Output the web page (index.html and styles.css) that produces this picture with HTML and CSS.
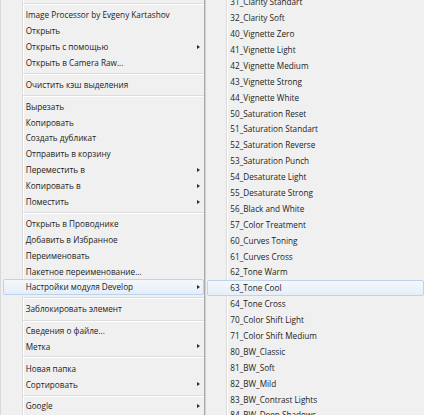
FILE: index.html
```html
<!DOCTYPE html>
<html lang="ru">
<head>
<meta charset="utf-8">
<title>Context menu</title>
<link rel="stylesheet" href="styles.css">
</head>
<body>
<div class="screen">
  <div class="menu menu-main">
    <div class="sep sep-top"></div>
    <div class="item">Image Processor by Evgeny Kartashov</div>
    <div class="item">Открыть</div>
    <div class="item sub">Открыть с помощью<span class="arrow"></span></div>
    <div class="item">Открыть в Camera Raw...</div>
    <div class="sep"></div>
    <div class="item">Очистить кэш выделения</div>
    <div class="sep"></div>
    <div class="item">Вырезать</div>
    <div class="item">Копировать</div>
    <div class="item">Создать дубликат</div>
    <div class="item">Отправить в корзину</div>
    <div class="item sub">Переместить в<span class="arrow"></span></div>
    <div class="item sub">Копировать в<span class="arrow"></span></div>
    <div class="item sub">Поместить<span class="arrow"></span></div>
    <div class="sep"></div>
    <div class="item">Открыть в Проводнике</div>
    <div class="item">Добавить в Избранное</div>
    <div class="item">Переименовать</div>
    <div class="item">Пакетное переименование...</div>
    <div class="item sub active">Настройки модуля Develop<span class="arrow"></span></div>
    <div class="sep"></div>
    <div class="item">Заблокировать элемент</div>
    <div class="sep"></div>
    <div class="item">Сведения о файле...</div>
    <div class="item sub">Метка<span class="arrow"></span></div>
    <div class="sep"></div>
    <div class="item">Новая папка</div>
    <div class="item sub">Сортировать<span class="arrow"></span></div>
    <div class="sep"></div>
    <div class="item sub">Google<span class="arrow"></span></div>
  </div>
  <div class="menu menu-sub">
    <div class="list">
      <div class="item">31_Clarity Standart</div>
      <div class="item">32_Clarity Soft</div>
      <div class="item">40_Vignette Zero</div>
      <div class="item">41_Vignette Light</div>
      <div class="item">42_Vignette Medium</div>
      <div class="item">43_Vignette Strong</div>
      <div class="item">44_Vignette White</div>
      <div class="item">50_Saturation Reset</div>
      <div class="item">51_Saturation Standart</div>
      <div class="item">52_Saturation Reverse</div>
      <div class="item">53_Saturation Punch</div>
      <div class="item">54_Desaturate Light</div>
      <div class="item">55_Desaturate Strong</div>
      <div class="item">56_Black and White</div>
      <div class="item">57_Color Treatment</div>
      <div class="item">60_Curves Toning</div>
      <div class="item">61_Curves Cross</div>
      <div class="item">62_Tone Warm</div>
      <div class="item active">63_Tone Cool</div>
      <div class="item">64_Tone Cross</div>
      <div class="item">70_Color Shift Light</div>
      <div class="item">71_Color Shift Medium</div>
      <div class="item">80_BW_Classic</div>
      <div class="item">81_BW_Soft</div>
      <div class="item">82_BW_Mild</div>
      <div class="item">83_BW_Contrast Lights</div>
      <div class="item">84_BW_Deep Shadows</div>
    </div>
  </div>
</div>
</body>
</html>
```
FILE: styles.css
```css
html, body {
  margin: 0;
  padding: 0;
  background: #f0f0f0;
}

.screen {
  display: flex;
  width: 424px;
  height: 415px;
  overflow: hidden;
  font-family: "Open Sans", "Noto Sans", sans-serif;
  font-size: 8.2px;
  color: #1c1c1c;
}

.menu {
  background-color: #f0f0f0;
  box-sizing: border-box;
  display: flex;
  flex-direction: column;
}

.menu-main {
  width: 205px;
  flex: none;
  padding-top: 1.15px;
  border-left: 1px solid #d9d9d9;
  border-right: 1px solid #aaaaaa;
  background-image: linear-gradient(to right, transparent 21px, #dcdcdc 21px, #dcdcdc 22px, #ffffff 22px, #ffffff 23px, transparent 23px);
}

.menu-sub {
  flex: 1;
  border-left: 1px solid #d2d2d2;
  background-image: linear-gradient(to right, transparent 20px, #dcdcdc 20px, #dcdcdc 21px, #ffffff 21px, #ffffff 22px, transparent 22px);
}

.list {
  display: flex;
  flex-direction: column;
  margin-top: -6.15px;
}

.item {
  height: 15.9px;
  flex: none;
  box-sizing: border-box;
  display: flex;
  align-items: center;
  justify-content: space-between;
  white-space: nowrap;
  border: 1px solid transparent;
  border-radius: 2px;
}

.menu-main .item {
  margin: 0 0 0 1.7px;
  padding: 0 3px 0 22px;
}

.menu-sub .item {
  margin: 0 0 0 1px;
  padding: 0 0 0 22.3px;
}

.item.active {
  border-color: #bcd3ee;
  background: linear-gradient(#f4f8fc, #e5eef9);
}

.arrow {
  width: 0;
  height: 0;
  border-left: 3px solid #2a2a2a;
  border-top: 2.5px solid transparent;
  border-bottom: 2.5px solid transparent;
}

.sep {
  height: 5.9px;
  flex: none;
  margin-left: 22px;
  background-image: linear-gradient(to bottom, transparent 2.5px, #dcdcdc 2.5px, #dcdcdc 3.5px, #ffffff 3.5px, #ffffff 4.5px, transparent 4.5px);
}
```
